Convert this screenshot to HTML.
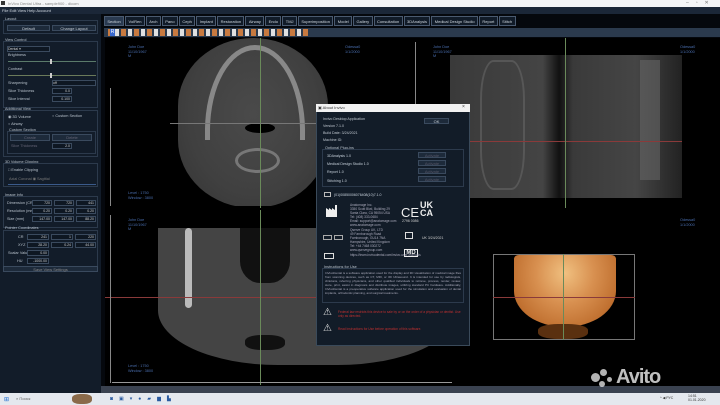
<!DOCTYPE html><html><head><style>
*{margin:0;padding:0;box-sizing:border-box}
body{width:720px;height:405px;overflow:hidden;background:#0a1019;font-family:"Liberation Sans",sans-serif;font-size:4px;color:#c8d2dc;position:relative}
.a{position:absolute}
.bx{position:absolute;border:1px solid #2c3a4c}
.btn{position:absolute;background:#1d2a3a;border:1px solid #3a4a5e;color:#c8d0d8;text-align:center;font-size:4px;line-height:5px}
.tab{display:inline-block;height:10px;line-height:9px;padding:0 2.4px;margin-right:1px;border:1px solid #4a5a70;background:#111b28;color:#d0d8e0;font-size:4px}
.lbl{position:absolute;font-size:3.8px;color:#b8c2cc}
.fld{position:absolute;background:#0e1722;border:1px solid #3a4a5e;font-size:3.5px;text-align:right;padding-right:1px;color:#ccc;line-height:5px;height:6px}
.blu{color:#4a6fb0;font-size:3.8px;position:absolute;line-height:4.5px}
</style></head><body>
<div class="a" style="left:0;top:0;width:720px;height:7px;background:#f4f5f7"></div>
<div class="a" style="left:1px;top:1px;width:4px;height:4px;background:#333"></div>
<div class="a" style="left:8px;top:1px;font-size:4px;color:#888">InVivo Dental Ultra - sample900 - dicom</div>
<div class="a" style="left:686px;top:0;font-size:5px;color:#777;letter-spacing:7px">–▫✕</div>
<div class="a" style="left:0;top:7px;width:720px;height:7px;background:#1b2738"></div>
<div class="a" style="left:2px;top:8px;font-size:4px;color:#d0d8e0">File  Edit  View  Help  Account</div>
<div class="a" style="left:0;top:14px;width:101px;height:379px;background:#121c29"></div>
<div class="lbl" style="left:5px;top:17px">Layout</div>
<div class="bx" style="left:3px;top:20px;width:95px;height:14px"></div>
<div class="btn" style="left:7px;top:25px;width:43px;height:6px">Default</div>
<div class="btn" style="left:52px;top:25px;width:44px;height:6px">Change Layout</div>
<div class="lbl" style="left:5px;top:38px">View Control</div>
<div class="bx" style="left:3px;top:41px;width:95px;height:67px"></div>
<div class="fld" style="left:7px;top:46px;width:43px;text-align:left">Dental ▾</div>
<div class="lbl" style="left:8px;top:53px">Brightness</div>
<div class="a" style="left:8px;top:61px;width:88px;height:1px;background:#5a7a6a"></div>
<div class="a" style="left:50px;top:59px;width:2px;height:5px;background:#ccc"></div>
<div class="lbl" style="left:8px;top:67px">Contrast</div>
<div class="a" style="left:8px;top:75px;width:88px;height:1px;background:#6a7a5a"></div>
<div class="a" style="left:50px;top:73px;width:2px;height:5px;background:#ccc"></div>
<div class="lbl" style="left:8px;top:81px">Sharpening</div><div class="fld" style="left:52px;top:80px;width:44px;text-align:left">off</div>
<div class="lbl" style="left:8px;top:89px">Slice Thickness</div><div class="fld" style="left:52px;top:88px;width:20px">0.0</div>
<div class="lbl" style="left:8px;top:97px">Slice Interval</div><div class="fld" style="left:52px;top:96px;width:20px">0.100</div>
<div class="lbl" style="left:5px;top:107px">Additional View</div>
<div class="bx" style="left:3px;top:110px;width:95px;height:47px"></div>
<div class="lbl" style="left:8px;top:114px">◉ 3D Volume</div><div class="lbl" style="left:52px;top:114px">○ Custom Section</div>
<div class="lbl" style="left:8px;top:122px">○ Airway</div>
<div class="lbl" style="left:9px;top:128px">Custom Section</div>
<div class="bx" style="left:7px;top:131px;width:89px;height:23px"></div>
<div class="btn" style="left:10px;top:134px;width:40px;height:7px;color:#667">Create</div>
<div class="btn" style="left:52px;top:134px;width:40px;height:7px;color:#667">Delete</div>
<div class="lbl" style="left:11px;top:144px;color:#667">Slice Thickness</div><div class="fld" style="left:52px;top:143px;width:20px">2.0</div>
<div class="lbl" style="left:5px;top:160px">3D Volume Clipping</div>
<div class="bx" style="left:3px;top:163px;width:95px;height:24px"></div>
<div class="lbl" style="left:8px;top:168px">□ Enable Clipping</div>
<div class="lbl" style="left:9px;top:176px;color:#777">Axial        Coronal        ◉ Sagittal</div>
<div class="a" style="left:8px;top:184px;width:88px;height:1px;background:#3a5a8a"></div>
<div class="lbl" style="left:5px;top:193px">Image Info</div>
<div class="bx" style="left:3px;top:196px;width:95px;height:32px"></div>
<div class="lbl" style="left:7px;top:201px">Dimension (CR)</div><div class="fld" style="left:32px;top:200px;width:20px">720</div><div class="fld" style="left:54px;top:200px;width:20px">720</div><div class="fld" style="left:76px;top:200px;width:20px">441</div>
<div class="lbl" style="left:7px;top:209px">Resolution (mm)</div><div class="fld" style="left:32px;top:208px;width:20px">0.20</div><div class="fld" style="left:54px;top:208px;width:20px">0.20</div><div class="fld" style="left:76px;top:208px;width:20px">0.20</div>
<div class="lbl" style="left:7px;top:217px">Size (mm)</div><div class="fld" style="left:32px;top:216px;width:20px">147.00</div><div class="fld" style="left:54px;top:216px;width:20px">147.00</div><div class="fld" style="left:76px;top:216px;width:20px">88.20</div>
<div class="lbl" style="left:5px;top:226px">Pointer Coordinates</div>
<div class="bx" style="left:3px;top:230px;width:95px;height:39px"></div>
<div class="lbl" style="left:18px;top:235px">CR</div><div class="fld" style="left:27px;top:234px;width:22px">241</div><div class="fld" style="left:51px;top:234px;width:22px">1</div><div class="fld" style="left:75px;top:234px;width:21px">220</div>
<div class="lbl" style="left:18px;top:243px">XYZ</div><div class="fld" style="left:27px;top:242px;width:22px">28.20</div><div class="fld" style="left:51px;top:242px;width:22px">0.24</div><div class="fld" style="left:75px;top:242px;width:21px">44.00</div>
<div class="lbl" style="left:8px;top:251px">Scalar Value</div><div class="fld" style="left:27px;top:250px;width:22px">0.00</div>
<div class="lbl" style="left:17px;top:259px">HU</div><div class="fld" style="left:27px;top:258px;width:22px">-1000.00</div>
<div class="btn" style="left:3px;top:266px;width:95px;height:6px;color:#888">Save View Settings</div>
<div class="a" style="left:101px;top:14px;width:619px;height:379px;background:#05080d"></div>
<div class="a" style="left:104px;top:16px;white-space:nowrap"><span class="tab" style="background:#2a3a50">Section</span><span class="tab">VolRen</span><span class="tab">Arch</span><span class="tab">Pano</span><span class="tab">Ceph</span><span class="tab">Implant</span><span class="tab">Restoration</span><span class="tab">Airway</span><span class="tab">Endo</span><span class="tab">TMJ</span><span class="tab">Superimposition</span><span class="tab">Model</span><span class="tab">Gallery</span><span class="tab">Consultation</span><span class="tab">3DAnalysis</span><span class="tab">Medical Design Studio</span><span class="tab">Report</span><span class="tab">Stitch</span></div>
<div class="a" style="left:104px;top:28px;width:616px;height:9px;background:#2b3a4d"></div>
<div class="a" style="left:108px;top:29px;width:200px;height:7px;background:repeating-linear-gradient(90deg,#c87a40 0 5px,#2b3a4d 5px 7px,#e0e0e0 7px 11px,#2b3a4d 11px 13px)"></div>
<div class="a" style="left:110px;top:29px;width:5px;height:7px;background:#3a6ad0;color:#fff;font-size:5px;text-align:center">R</div>
<div class="a" style="left:105px;top:38px;width:615px;height:350px;background:#000"></div>
<!-- axial -->
<div class="a" style="left:178px;top:38px;width:150px;height:170px;border-radius:50%/40%;background:radial-gradient(ellipse at 50% 45%,#4a4a4a 0,#404040 60%,#333 100%)"></div>
<div class="a" style="left:205px;top:45px;width:100px;height:95px;border:5px solid #9a9a9a;border-bottom:none;border-radius:50% 50% 0 0/90% 90% 0 0;opacity:.8"></div>
<div class="a" style="left:245px;top:123px;width:30px;height:10px;background:#000;border-radius:50%"></div>
<div class="a" style="left:235px;top:148px;width:45px;height:25px;border:3px solid #777;border-radius:50%"></div>
<div class="a" style="left:105px;top:206px;width:340px;height:4px;background:#000"></div>
<div class="a" style="left:260px;top:38px;width:1px;height:170px;background:#6a8a5a"></div>
<div class="a" style="left:170px;top:123px;width:170px;height:1px;background:#777"></div>
<div class="blu" style="left:128px;top:45px">John Doe<br>11/10/1967<br>M</div>
<div class="blu" style="left:128px;top:191px">Level : 1750<br>Window : 3800</div>
<div class="blu" style="left:345px;top:45px">Odessa0<br>1/1/2000</div>
<div class="a" style="left:110px;top:88px;width:1px;height:118px;background:#888"></div>
<!-- sagittal -->
<div class="a" style="left:450px;top:55px;width:232px;height:143px;background:linear-gradient(90deg,#3a3a3a 0,#444 40%,#111 47%,#3a3a3a 53%,#454545 80%,#222 100%)"></div>
<div class="a" style="left:480px;top:60px;width:45px;height:130px;border:2px solid #666;border-radius:30%;opacity:.6"></div>
<div class="a" style="left:640px;top:60px;width:20px;height:120px;background:#666;opacity:.6"></div>
<div class="a" style="left:450px;top:141px;width:232px;height:1px;background:#8a3a3a"></div>
<div class="a" style="left:565px;top:38px;width:1px;height:170px;background:#6a8a5a"></div>
<div class="blu" style="left:433px;top:45px">John Doe<br>11/10/1967<br>M</div>
<div class="blu" style="left:680px;top:45px">Odessa0<br>1/1/2000</div>
<div class="a" style="left:415px;top:42px;width:1px;height:160px;background:#888"></div>
<!-- coronal -->
<div class="a" style="left:158px;top:228px;width:300px;height:137px;background:#444;border-radius:0 0 40% 40%"></div>
<div class="a" style="left:185px;top:228px;width:7px;height:80px;background:#bbb;border-radius:4px"></div>
<div class="a" style="left:240px;top:228px;width:50px;height:55px;background:#111;border-radius:0 0 40% 40%"></div>
<div class="a" style="left:245px;top:335px;width:40px;height:15px;background:#111;border-radius:40%"></div>
<div class="a" style="left:105px;top:297px;width:355px;height:1px;background:#8a3a3a"></div>
<div class="a" style="left:260px;top:210px;width:1px;height:175px;background:#6a8a5a"></div>
<div class="a" style="left:112px;top:382px;width:340px;height:1px;background:#999"></div>
<div class="a" style="left:110px;top:215px;width:1px;height:168px;background:#888"></div>
<div class="blu" style="left:128px;top:218px">John Doe<br>11/10/1967<br>M</div>
<div class="blu" style="left:128px;top:364px">Level : 1750<br>Window : 3800</div>
<!-- 3D -->
<div class="a" style="left:493px;top:254px;width:142px;height:86px;border:1px solid #777"></div>
<div class="a" style="left:514px;top:255px;width:102px;height:72px;background:radial-gradient(ellipse at 50% 25%,#f0c080 0,#d89050 40%,#c07030 75%,#7a4010 100%);border-radius:5% 5% 50% 50%"></div>
<div class="a" style="left:538px;top:324px;width:50px;height:15px;background:#5a3010;border-radius:40%"></div>
<div class="a" style="left:493px;top:297px;width:142px;height:1px;background:#8a3a3a"></div>
<div class="a" style="left:563px;top:254px;width:1px;height:86px;background:#6a8a5a"></div>
<div class="blu" style="left:680px;top:218px">Odessa0<br>1/1/2000</div>
<div class="a" style="left:101px;top:386px;width:619px;height:7px;background:#3a4250"></div>
<div class="a" style="left:616px;top:366px;font-size:20px;font-weight:bold;color:rgba(255,255,255,.75);letter-spacing:-1px">Avito</div>
<div class="a" style="left:591px;top:373px;width:9px;height:9px;border-radius:50%;background:rgba(255,255,255,.7)"></div>
<div class="a" style="left:600px;top:369px;width:7px;height:7px;border-radius:50%;background:rgba(255,255,255,.7)"></div>
<div class="a" style="left:599px;top:381px;width:6px;height:6px;border-radius:50%;background:rgba(255,255,255,.7)"></div>
<div class="a" style="left:607px;top:377px;width:5px;height:5px;border-radius:50%;background:rgba(255,255,255,.7)"></div>
<!-- dialog -->
<div class="a" style="left:316px;top:104px;width:154px;height:242px;background:#121c28;border:1px solid #3a4a5a"></div>
<div class="a" style="left:316px;top:104px;width:154px;height:8px;background:#f2f2f2"></div>
<div class="a" style="left:318px;top:105px;font-size:4px;color:#333">▣ About Invivo</div>
<div class="a" style="left:462px;top:104px;font-size:5px;color:#333">×</div>
<div class="a" style="left:323px;top:116px;font-size:3.6px;line-height:7px;color:#c0c8d0">Invivo Desktop Application<br>Version 7.1.0<br>Build Date: 3/24/2021<br>Machine ID:</div>
<div class="btn" style="left:424px;top:118px;width:25px;height:6px">OK</div>
<div class="lbl" style="left:325px;top:146px">Optional Plug-ins</div>
<div class="bx" style="left:322px;top:149px;width:142px;height:38px"></div>
<div class="a" style="left:327px;top:152px;font-size:3.6px;line-height:8.2px">3DAnalysis 1.0<br>Medical Design Studio 1.0<br>Report 1.0<br>Stitching 1.0</div>
<div class="btn" style="left:418px;top:152px;width:28px;height:6px;color:#556">Activate</div>
<div class="btn" style="left:418px;top:160px;width:28px;height:6px;color:#556">Activate</div>
<div class="btn" style="left:418px;top:168px;width:28px;height:6px;color:#556">Activate</div>
<div class="btn" style="left:418px;top:176px;width:28px;height:6px;color:#556">Activate</div>
<div class="a" style="left:324px;top:192px;width:7px;height:5px;border:1px solid #bbb"></div>
<div class="a" style="left:334px;top:193px;font-size:3.5px">(01)00850006076408(10)7.1.0</div>
<svg class="a" style="left:325px;top:204px" width="14" height="14" viewBox="0 0 14 14"><path d="M1 13V4l3 2V4l3 2V4l3 2V1h2v12z" fill="#eee"/></svg>
<div class="a" style="left:350px;top:203px;font-size:3.2px;line-height:4px;color:#aab">Anatomage Inc.<br>3350 Scott Blvd, Building 29<br>Santa Clara, CA 95054 USA<br>Tel: (408) 333-0684<br>Email: support@anatomage.com<br>www.anatomage.com</div>
<div class="a" style="left:401px;top:205px;font-size:13px;color:#eee">CE</div>
<div class="a" style="left:420px;top:201px;font-size:9px;font-weight:bold;line-height:8px;color:#eee">UK<br>CA</div>
<div class="a" style="left:402px;top:219px;font-size:3.5px;color:#ccc">2796        0086</div>
<div class="bx" style="left:323px;top:235px;width:9px;height:5px;border-color:#aaa"></div><div class="bx" style="left:334px;top:235px;width:9px;height:5px;border-color:#aaa"></div>
<div class="a" style="left:350px;top:228px;font-size:3.2px;line-height:4px;color:#aab">Qserve Group UK, LTD<br>49 Farnborough Road<br>Farnborough, GU14 7NA<br>Hampshire, United Kingdom<br>Tel: +44 7468 030272<br>www.qservegroup.com</div>
<div class="a" style="left:405px;top:232px;width:8px;height:7px;border:1px solid #ddd"></div>
<div class="a" style="left:422px;top:236px;font-size:3.5px;color:#ccc">UK 3/24/2021</div>
<div class="a" style="left:404px;top:249px;width:14px;height:8px;border:1px solid #eee;font-size:6px;font-weight:bold;color:#eee;text-align:center;line-height:7px">MD</div>
<div class="a" style="left:324px;top:253px;width:10px;height:6px;border:1px solid #ddd"></div>
<div class="a" style="left:350px;top:253px;font-size:3.2px;line-height:4px;color:#aab">https://learn.invivodental.com/invivo-user-manuals</div>
<div class="lbl" style="left:324px;top:265px">Instructions for Use</div>
<div class="bx" style="left:322px;top:268px;width:142px;height:35px"></div>
<div class="a" style="left:325px;top:271px;width:136px;font-size:3px;line-height:4px;color:#aab;text-align:justify">InVivoDental is a software application used for the display and 3D visualization of medical image files from scanning devices, such as CT, MRI, or 3D Ultrasound. It is intended for use by radiologists, clinicians, referring physicians, and other qualified individuals to retrieve, process, render, review, store, print, assist in diagnosis and distribute images, utilizing standard PC hardware. Additionally, InVivoDental is a preoperative software application used for the simulation and evaluation of dental implants, orthodontic planning, and surgical treatments.</div>
<div class="a" style="left:323px;top:307px;font-size:10px;color:#ddd">⚠</div>
<div class="a" style="left:338px;top:310px;font-size:3.2px;line-height:4px;color:#c03030;width:125px">Federal law restricts this device to sale by or on the order of a physician or dentist. Use only as directed.</div>
<div class="a" style="left:323px;top:323px;font-size:10px;color:#ddd">⚠</div>
<div class="a" style="left:338px;top:327px;font-size:3.2px;line-height:4px;color:#c03030;width:125px">Read Instructions for Use before operation of this software.</div>
<div class="a" style="left:0;top:393px;width:720px;height:12px;background:#e4e8ee"></div>
<div class="a" style="left:4px;top:396px;font-size:6px;color:#1a6ad0">⊞</div>
<div class="a" style="left:16px;top:396px;width:50px;height:7px;font-size:4px;color:#666">⌕ Поиск</div>
<div class="a" style="left:72px;top:394px;width:20px;height:10px;background:#8a6a4a;border-radius:40%"></div>
<div class="a" style="left:110px;top:396px;font-size:5px;color:#2a5aa0;letter-spacing:6px">◙▣▾●▰▆▙</div>
<div class="a" style="left:660px;top:396px;font-size:3.5px;color:#333">^ ◀ РУС</div>
<div class="a" style="left:688px;top:394px;font-size:3.5px;color:#333;line-height:4px">14:51<br>01.01.2020</div>
</body></html>
